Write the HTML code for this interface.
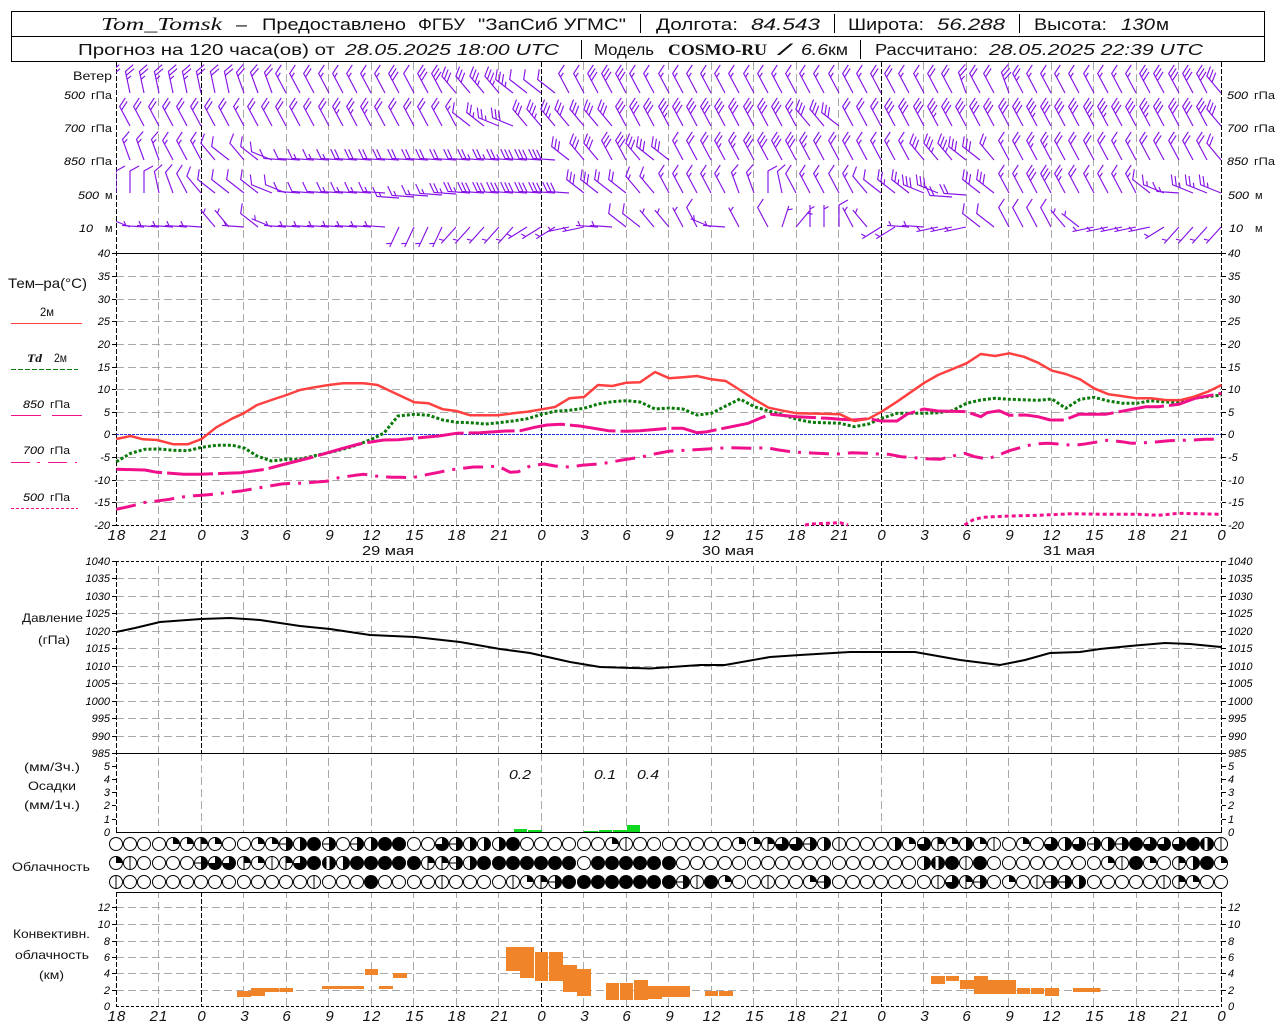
<!DOCTYPE html>
<html><head><meta charset="utf-8"><title>Tom_Tomsk</title>
<style>
html,body{margin:0;padding:0;background:#fff}
svg{display:block}
text{font-family:"Liberation Sans",sans-serif;fill:#111;white-space:pre}
.i{font-style:italic}
.se{font-family:"Liberation Serif",serif;font-style:italic}
.b{font-family:"Liberation Serif",serif;font-weight:bold}
.t{font-size:17px}
.t2{font-size:16px}
.l{font-size:12px}
.m{font-size:11px}
.n{font-size:11px;font-style:italic;fill:#000}
.h{font-size:15px;font-style:italic;text-anchor:middle;letter-spacing:1px;transform:translateX(1px)}
.e{text-anchor:end}
.f{fill:none;stroke:#8612e8;stroke-width:1.15}
</style></head><body>
<svg xmlns="http://www.w3.org/2000/svg" width="1280" height="1024" viewBox="0 0 1280 1024">
<defs>
<path id="f1" d="M0 0V-22M0-18l4.5-2.5"/>
<path id="f2" d="M0 0V-22l9-5"/>
<path id="f3" d="M0 0V-22l9-5M0-18l4.5-2.5"/>
<path id="f4" d="M0 0V-22l9-5M0-18l9-5"/>
<path id="f5" d="M0 0V-22l9-5M0-18l9-5M0-14l4.5-2.5"/>
<path id="f6" d="M0 0V-22l9-5M0-18l9-5M0-14l9-5"/>
<path id="f7" d="M0 0V-22l9-5M0-18l9-5M0-14l9-5M0-10l4.5-2.5"/>
<g id="A2" transform="rotate(-12)"><use href="#f2"/></g><g id="A4" transform="rotate(-12)"><use href="#f4"/></g><g id="A5" transform="rotate(-12)"><use href="#f5"/></g>
<g id="B2" transform="rotate(-20)"><use href="#f2"/></g><g id="B3" transform="rotate(-20)"><use href="#f3"/></g><g id="B4" transform="rotate(-20)"><use href="#f4"/></g><g id="B5" transform="rotate(-20)"><use href="#f5"/></g><g id="B6" transform="rotate(-20)"><use href="#f6"/></g>
<g id="C1" transform="rotate(-28)"><use href="#f1"/></g><g id="C2" transform="rotate(-28)"><use href="#f2"/></g><g id="C3" transform="rotate(-28)"><use href="#f3"/></g><g id="C4" transform="rotate(-28)"><use href="#f4"/></g><g id="C5" transform="rotate(-28)"><use href="#f5"/></g><g id="C6" transform="rotate(-28)"><use href="#f6"/></g><g id="C7" transform="rotate(-28)"><use href="#f7"/></g>
<g id="D1" transform="rotate(-40)"><use href="#f1"/></g><g id="D2" transform="rotate(-40)"><use href="#f2"/></g><g id="D3" transform="rotate(-40)"><use href="#f3"/></g><g id="D4" transform="rotate(-40)"><use href="#f4"/></g><g id="D6" transform="rotate(-40)"><use href="#f6"/></g><g id="D7" transform="rotate(-40)"><use href="#f7"/></g>
<g id="E1" transform="rotate(-52)"><use href="#f1"/></g><g id="E2" transform="rotate(-52)"><use href="#f2"/></g><g id="E4" transform="rotate(-52)"><use href="#f4"/></g><g id="E5" transform="rotate(-52)"><use href="#f5"/></g><g id="E6" transform="rotate(-52)"><use href="#f6"/></g><g id="E7" transform="rotate(-52)"><use href="#f7"/></g>
<g id="F1" transform="rotate(-68)"><use href="#f1"/></g><g id="F2" transform="rotate(-68)"><use href="#f2"/></g><g id="F3" transform="rotate(-68)"><use href="#f3"/></g><g id="F5" transform="rotate(-68)"><use href="#f5"/></g><g id="F6" transform="rotate(-68)"><use href="#f6"/></g>
<g id="G1" transform="rotate(-86)"><use href="#f1"/></g><g id="G2" transform="rotate(-86)"><use href="#f2"/></g><g id="G3" transform="rotate(-86)"><use href="#f3"/></g><g id="G4" transform="rotate(-86)"><use href="#f4"/></g><g id="G5" transform="rotate(-86)"><use href="#f5"/></g><g id="G6" transform="rotate(-86)"><use href="#f6"/></g>
<use id="V1" href="#f1"/><use id="V2" href="#f2"/>
<g id="W1" transform="rotate(18)"><use href="#f1"/></g><g id="X1" transform="rotate(40)"><use href="#f1"/></g>
<g id="P1" transform="rotate(205)"><use href="#f1"/></g><g id="Q1" transform="rotate(222)"><use href="#f1"/></g><g id="R1" transform="rotate(238)"><use href="#f1"/></g><g id="S1" transform="rotate(258)"><use href="#f1"/></g>
<clipPath id="cw"><rect x="116" y="62" width="1106" height="191"/></clipPath>
<circle id="O" r="6.5" fill="#fff" stroke="#000"/>
<g id="v"><use href="#O"/><path d="M0-6.5V6.5" stroke="#000"/></g>
<g id="q"><use href="#O"/><path d="M0 0V-6.5A6.5 6.5 0 0 1 6.5 0Z"/></g>
<g id="r"><use href="#v"/><path d="M0 0V-6.5A6.5 6.5 0 0 1 6.5 0Z"/></g>
<g id="d"><use href="#O"/><path d="M0-6.5A6.5 6.5 0 0 1 0 6.5Z"/></g>
<g id="h"><use href="#d"/><path d="M-6.5 0H0" stroke="#000"/></g>
<g id="t"><circle r="6.5" fill="#000" stroke="#000"/><path d="M0 0V-6A6 6 0 0 0 -6 0Z" fill="#fff"/></g>
<circle id="b" r="7" fill="#000"/>
<g id="w"><circle r="7" fill="#000"/><rect x="-2.5" y="-6" width="3" height="12" fill="#fff"/></g>
</defs>
<rect width="1280" height="1024" fill="#fff"/>

<!-- grid -->
<g stroke="#a9a9a9" stroke-width="1" stroke-dasharray="8 4" fill="none" shape-rendering="crispEdges">
<path d="M158.5 62V1006M201.5 753V832M243.5 62V1006M286.5 62V1006M328.5 62V1006M371.5 62V1006M413.5 62V1006M456.5 62V1006M498.5 62V1006M541.5 753V832M583.5 62V1006M626.5 62V1006M668.5 62V1006M711.5 62V1006M753.5 62V1006M796.5 62V1006M838.5 62V1006M881.5 753V832M923.5 62V1006M966.5 62V1006M1008.5 62V1006M1051.5 62V1006M1093.5 62V1006M1136.5 62V1006M1178.5 62V1006"/>
<path d="M116 276.5H1221M116 299.5H1221M116 321.5H1221M116 344.5H1221M116 367.5H1221M116 389.5H1221M116 412.5H1221M116 457.5H1221M116 480.5H1221M116 502.5H1221M116 578.5H1221M116 596.5H1221M116 613.5H1221M116 631.5H1221M116 648.5H1221M116 666.5H1221M116 683.5H1221M116 701.5H1221M116 718.5H1221M116 736.5H1221M116 907.5H1221M116 924.5H1221M116 941.5H1221M116 957.5H1221M116 973.5H1221M116 990.5H1221"/>
</g>
<rect x="113" y="526" width="1112" height="35" fill="#fff"/>
<rect x="0" y="833" width="1280" height="59" fill="#fff"/>

<!-- axes -->
<g stroke="#000" stroke-width="1" fill="none" shape-rendering="crispEdges">
<path stroke-dasharray="5 2" d="M116.5 62V525M201.5 62V525M541.5 62V525M881.5 62V525M1221.5 62V525M116.5 561V832M201.5 561V753M541.5 561V753M881.5 561V753M1221.5 561V832M116.5 892V1006M201.5 892V1006M541.5 892V1006M881.5 892V1006M1221.5 892V1006"/>
<path stroke-dasharray="3 2" d="M116 525.5H1222M116 561.5H1222M116 1006.5H1222"/>
<path d="M116 253.5H1222M116 753.5H1222M116 832.5H1222M116 892.5H1222"/>
<path d="M112 253.5h4M112 276.5h4M112 299.5h4M112 321.5h4M112 344.5h4M112 367.5h4M112 389.5h4M112 412.5h4M112 434.5h4M112 457.5h4M112 480.5h4M112 502.5h4M112 525.5h4M112 561.5h4M112 578.5h4M112 596.5h4M112 613.5h4M112 631.5h4M112 648.5h4M112 666.5h4M112 683.5h4M112 701.5h4M112 718.5h4M112 736.5h4M112 753.5h4M112 766.5h4M112 779.5h4M112 792.5h4M112 805.5h4M112 819.5h4M112 907.5h4M112 924.5h4M112 941.5h4M112 957.5h4M112 973.5h4M112 990.5h4"/>
<path d="M1222 253.5h4M1222 276.5h4M1222 299.5h4M1222 321.5h4M1222 344.5h4M1222 367.5h4M1222 389.5h4M1222 412.5h4M1222 434.5h4M1222 457.5h4M1222 480.5h4M1222 502.5h4M1222 525.5h4M1222 561.5h4M1222 578.5h4M1222 596.5h4M1222 613.5h4M1222 631.5h4M1222 648.5h4M1222 666.5h4M1222 683.5h4M1222 701.5h4M1222 718.5h4M1222 736.5h4M1222 753.5h4M1222 766.5h4M1222 779.5h4M1222 792.5h4M1222 805.5h4M1222 819.5h4M1222 907.5h4M1222 924.5h4M1222 941.5h4M1222 957.5h4M1222 973.5h4M1222 990.5h4"/>
<rect x="11.5" y="11.5" width="1253" height="25"/>
<rect x="11.5" y="36.5" width="1253" height="25"/>
<path d="M640.5 14V33M834.5 14V33M1019.5 14V33M581.5 40V59M860.5 40V59"/>
</g>

<!-- header -->
<text class="se" style="font-size:18px" x="101" y="30" textLength="121" lengthAdjust="spacingAndGlyphs">Tom_Tomsk</text>
<text class="t" x="236" y="30" textLength="11" lengthAdjust="spacingAndGlyphs">–</text>
<text class="t" x="262" y="30" textLength="144" lengthAdjust="spacingAndGlyphs">Предоставлено</text>
<text class="t" x="418" y="30" textLength="47" lengthAdjust="spacingAndGlyphs">ФГБУ</text>
<text class="t" x="478" y="30" textLength="148" lengthAdjust="spacingAndGlyphs">"ЗапСиб УГМС"</text>
<text class="t" x="656" y="30" textLength="82" lengthAdjust="spacingAndGlyphs">Долгота:</text>
<text class="t i" x="751" y="30" textLength="69" lengthAdjust="spacingAndGlyphs">84.543</text>
<text class="t" x="848" y="30" textLength="76" lengthAdjust="spacingAndGlyphs">Широта:</text>
<text class="t i" x="937" y="30" textLength="68" lengthAdjust="spacingAndGlyphs">56.288</text>
<text class="t" x="1034" y="30" textLength="73" lengthAdjust="spacingAndGlyphs">Высота:</text>
<text class="t i" x="1121" y="30" textLength="34" lengthAdjust="spacingAndGlyphs">130</text>
<text class="t" x="1156" y="30" textLength="13" lengthAdjust="spacingAndGlyphs">м</text>
<text class="t2" x="78" y="55" textLength="257" lengthAdjust="spacingAndGlyphs">Прогноз на 120 часа(ов) от</text>
<text class="t2 i" x="345" y="55" textLength="214" lengthAdjust="spacingAndGlyphs">28.05.2025 18:00 UTC</text>
<text class="t2" x="594" y="55" textLength="60" lengthAdjust="spacingAndGlyphs">Модель</text>
<text class="t2 b" x="668" y="55" textLength="99" lengthAdjust="spacingAndGlyphs">COSMO-RU</text>
<text class="t2 i" x="779" y="55" textLength="11" lengthAdjust="spacingAndGlyphs">/</text>
<text class="t2 i" x="801" y="55" textLength="27" lengthAdjust="spacingAndGlyphs">6.6</text>
<text class="t2" x="828" y="55" textLength="20" lengthAdjust="spacingAndGlyphs">км</text>
<text class="t2" x="875" y="55" textLength="103" lengthAdjust="spacingAndGlyphs">Рассчитано:</text>
<text class="t2 i" x="989" y="55" textLength="214" lengthAdjust="spacingAndGlyphs">28.05.2025 22:39 UTC</text>

<!-- side labels wind -->
<text class="l" x="73" y="80" textLength="39" lengthAdjust="spacingAndGlyphs">Ветер</text>
<text class="n" x="64" y="99" textLength="21" lengthAdjust="spacingAndGlyphs">500</text><text class="m" x="91" y="99" textLength="21" lengthAdjust="spacingAndGlyphs">гПа</text>
<text class="n" x="64" y="132" textLength="21" lengthAdjust="spacingAndGlyphs">700</text><text class="m" x="91" y="132" textLength="21" lengthAdjust="spacingAndGlyphs">гПа</text>
<text class="n" x="64" y="165" textLength="21" lengthAdjust="spacingAndGlyphs">850</text><text class="m" x="91" y="165" textLength="21" lengthAdjust="spacingAndGlyphs">гПа</text>
<text class="n" x="78" y="199" textLength="21" lengthAdjust="spacingAndGlyphs">500</text><text class="m" x="105" y="199">м</text>
<text class="n" x="79" y="232" textLength="14" lengthAdjust="spacingAndGlyphs">10</text><text class="m" x="105" y="232">м</text>
<text class="n" x="1227" y="99" textLength="21" lengthAdjust="spacingAndGlyphs">500</text><text class="m" x="1254" y="99" textLength="21" lengthAdjust="spacingAndGlyphs">гПа</text>
<text class="n" x="1227" y="132" textLength="21" lengthAdjust="spacingAndGlyphs">700</text><text class="m" x="1254" y="132" textLength="21" lengthAdjust="spacingAndGlyphs">гПа</text>
<text class="n" x="1227" y="165" textLength="21" lengthAdjust="spacingAndGlyphs">850</text><text class="m" x="1254" y="165" textLength="21" lengthAdjust="spacingAndGlyphs">гПа</text>
<text class="n" x="1228" y="199" textLength="21" lengthAdjust="spacingAndGlyphs">500</text><text class="m" x="1255" y="199">м</text>
<text class="n" x="1229" y="232" textLength="14" lengthAdjust="spacingAndGlyphs">10</text><text class="m" x="1255" y="232">м</text>

<!-- wind barbs -->
<g clip-path="url(#cw)"><g class="f">
<g transform="translate(0,93)">
<use href="#A4" x="116"/><use href="#A5" x="130"/><use href="#A5" x="144"/><use href="#A5" x="159"/><use href="#A5" x="173"/><use href="#A5" x="187"/><use href="#A4" x="201"/><use href="#A4" x="215"/><use href="#A4" x="229"/><use href="#B4" x="244"/><use href="#B4" x="258"/><use href="#B4" x="272"/><use href="#C3" x="286"/><use href="#C3" x="300"/><use href="#C4" x="314"/><use href="#C3" x="329"/><use href="#C3" x="343"/><use href="#C3" x="357"/><use href="#C3" x="371"/><use href="#C3" x="385"/><use href="#C6" x="399"/><use href="#C2" x="414"/><use href="#C6" x="428"/><use href="#C6" x="442"/><use href="#D6" x="456"/><use href="#D6" x="470"/><use href="#D7" x="484"/><use href="#D7" x="499"/><use href="#E7" x="513"/><use href="#E2" x="527"/><use href="#E2" x="541"/><use href="#E2" x="555"/><use href="#C3" x="569"/><use href="#C3" x="584"/><use href="#C6" x="598"/><use href="#C6" x="612"/><use href="#C6" x="626"/><use href="#C3" x="640"/><use href="#C3" x="654"/><use href="#C3" x="669"/><use href="#C3" x="683"/><use href="#C3" x="697"/><use href="#C3" x="711"/><use href="#C3" x="725"/><use href="#C3" x="739"/><use href="#C3" x="754"/><use href="#C3" x="768"/><use href="#C3" x="782"/><use href="#C3" x="796"/><use href="#C3" x="810"/><use href="#C3" x="824"/><use href="#C3" x="839"/><use href="#C4" x="853"/><use href="#C3" x="867"/><use href="#C4" x="881"/><use href="#C4" x="895"/><use href="#C3" x="909"/><use href="#C3" x="924"/><use href="#C4" x="938"/><use href="#C4" x="952"/><use href="#B5" x="966"/><use href="#C4" x="980"/><use href="#C4" x="994"/><use href="#B6" x="1009"/><use href="#C5" x="1023"/><use href="#C3" x="1037"/><use href="#C3" x="1051"/><use href="#C3" x="1065"/><use href="#C3" x="1079"/><use href="#C3" x="1094"/><use href="#C3" x="1108"/><use href="#C3" x="1122"/><use href="#C3" x="1136"/><use href="#C6" x="1150"/><use href="#C6" x="1164"/><use href="#C6" x="1179"/><use href="#C6" x="1193"/><use href="#C6" x="1207"/><use href="#D6" x="1221"/>
</g>
<g transform="translate(0,126)">
<use href="#C4" x="116"/><use href="#C4" x="130"/><use href="#C4" x="144"/><use href="#C4" x="159"/><use href="#C4" x="173"/><use href="#C4" x="187"/><use href="#C4" x="201"/><use href="#C4" x="215"/><use href="#C4" x="229"/><use href="#C3" x="244"/><use href="#C4" x="258"/><use href="#C4" x="272"/><use href="#C4" x="286"/><use href="#C4" x="300"/><use href="#C4" x="314"/><use href="#C4" x="329"/><use href="#C5" x="343"/><use href="#C5" x="357"/><use href="#C5" x="371"/><use href="#C4" x="385"/><use href="#C4" x="399"/><use href="#C4" x="414"/><use href="#C4" x="428"/><use href="#C4" x="442"/><use href="#C3" x="456"/><use href="#E2" x="470"/><use href="#E5" x="484"/><use href="#F5" x="499"/><use href="#F6" x="513"/><use href="#D6" x="527"/><use href="#D7" x="541"/><use href="#D7" x="555"/><use href="#D6" x="569"/><use href="#D6" x="584"/><use href="#D6" x="598"/><use href="#D6" x="612"/><use href="#C6" x="626"/><use href="#C6" x="640"/><use href="#C6" x="654"/><use href="#C7" x="669"/><use href="#C6" x="683"/><use href="#C6" x="697"/><use href="#C6" x="711"/><use href="#C6" x="725"/><use href="#C6" x="739"/><use href="#C6" x="754"/><use href="#C6" x="768"/><use href="#C6" x="782"/><use href="#C5" x="796"/><use href="#D6" x="810"/><use href="#D6" x="824"/><use href="#E6" x="839"/><use href="#C4" x="853"/><use href="#C4" x="867"/><use href="#C4" x="881"/><use href="#C6" x="895"/><use href="#C6" x="909"/><use href="#C6" x="924"/><use href="#C7" x="938"/><use href="#C6" x="952"/><use href="#C6" x="966"/><use href="#C6" x="980"/><use href="#C6" x="994"/><use href="#C6" x="1009"/><use href="#C6" x="1023"/><use href="#C7" x="1037"/><use href="#C6" x="1051"/><use href="#C6" x="1065"/><use href="#C6" x="1079"/><use href="#C7" x="1094"/><use href="#C7" x="1108"/><use href="#C6" x="1122"/><use href="#C6" x="1136"/><use href="#C7" x="1150"/><use href="#C6" x="1164"/><use href="#C6" x="1179"/><use href="#C6" x="1193"/><use href="#C6" x="1207"/><use href="#D6" x="1221"/>
</g>
<g transform="translate(0,160)">
<use href="#B3" x="116"/><use href="#B3" x="130"/><use href="#B3" x="144"/><use href="#B3" x="159"/><use href="#C3" x="173"/><use href="#C3" x="187"/><use href="#C3" x="201"/><use href="#D2" x="215"/><use href="#E2" x="229"/><use href="#D2" x="244"/><use href="#E2" x="258"/><use href="#F2" x="272"/><use href="#G2" x="286"/><use href="#G2" x="300"/><use href="#G3" x="314"/><use href="#G3" x="329"/><use href="#G3" x="343"/><use href="#G4" x="357"/><use href="#G4" x="371"/><use href="#G4" x="385"/><use href="#G4" x="399"/><use href="#G4" x="414"/><use href="#G4" x="428"/><use href="#G4" x="442"/><use href="#G4" x="456"/><use href="#G4" x="470"/><use href="#G5" x="484"/><use href="#G5" x="499"/><use href="#G5" x="513"/><use href="#G6" x="527"/><use href="#G6" x="541"/><use href="#G6" x="555"/><use href="#E6" x="569"/><use href="#D6" x="584"/><use href="#D6" x="598"/><use href="#C6" x="612"/><use href="#C6" x="626"/><use href="#D6" x="640"/><use href="#E6" x="654"/><use href="#E6" x="669"/><use href="#C3" x="683"/><use href="#C4" x="697"/><use href="#C4" x="711"/><use href="#C5" x="725"/><use href="#C5" x="739"/><use href="#C6" x="754"/><use href="#C6" x="768"/><use href="#C6" x="782"/><use href="#C6" x="796"/><use href="#C5" x="810"/><use href="#C4" x="824"/><use href="#C4" x="839"/><use href="#C4" x="853"/><use href="#C3" x="867"/><use href="#C3" x="881"/><use href="#C3" x="895"/><use href="#C3" x="909"/><use href="#D6" x="924"/><use href="#D7" x="938"/><use href="#D7" x="952"/><use href="#E6" x="966"/><use href="#E6" x="980"/><use href="#D4" x="994"/><use href="#C3" x="1009"/><use href="#C4" x="1023"/><use href="#C5" x="1037"/><use href="#C5" x="1051"/><use href="#C4" x="1065"/><use href="#C4" x="1079"/><use href="#C4" x="1094"/><use href="#C4" x="1108"/><use href="#C3" x="1122"/><use href="#C3" x="1136"/><use href="#C4" x="1150"/><use href="#C4" x="1164"/><use href="#C4" x="1179"/><use href="#C4" x="1193"/><use href="#C4" x="1207"/><use href="#D4" x="1221"/>
</g>
<g transform="translate(0,193)">
<use href="#V2" x="116"/><use href="#V2" x="130"/><use href="#V2" x="144"/><use href="#A2" x="159"/><use href="#B2" x="173"/><use href="#C2" x="187"/><use href="#D2" x="201"/><use href="#E2" x="215"/><use href="#E2" x="229"/><use href="#E2" x="244"/><use href="#E2" x="258"/><use href="#F2" x="272"/><use href="#F2" x="286"/><use href="#G2" x="300"/><use href="#G2" x="314"/><use href="#G2" x="329"/><use href="#G3" x="343"/><use href="#G3" x="357"/><use href="#G3" x="371"/><use href="#G3" x="385"/><use href="#G3" x="399" y="5"/><use href="#G3" x="414" y="4"/><use href="#G3" x="428" y="3"/><use href="#G3" x="442" y="2"/><use href="#G5" x="456" y="1"/><use href="#G5" x="470"/><use href="#G6" x="484"/><use href="#G6" x="499"/><use href="#G6" x="513"/><use href="#G6" x="527"/><use href="#G6" x="541"/><use href="#G6" x="555"/><use href="#G6" x="569"/><use href="#E6" x="584"/><use href="#E6" x="598"/><use href="#E4" x="612"/><use href="#E4" x="626"/><use href="#D3" x="640"/><use href="#D3" x="654"/><use href="#C3" x="669"/><use href="#C3" x="683"/><use href="#C3" x="697"/><use href="#C3" x="711"/><use href="#C3" x="725"/><use href="#B3" x="739"/><use href="#B3" x="754"/><use href="#V2" x="768"/><use href="#A2" x="782"/><use href="#C2" x="796"/><use href="#C3" x="810"/><use href="#C3" x="824"/><use href="#C2" x="839"/><use href="#C3" x="853"/><use href="#D2" x="867"/><use href="#E2" x="881"/><use href="#E5" x="895"/><use href="#E5" x="909"/><use href="#F6" x="924"/><use href="#F6" x="938"/><use href="#G4" x="952" y="4"/><use href="#G4" x="966" y="2"/><use href="#E6" x="980"/><use href="#E6" x="994"/><use href="#C3" x="1009"/><use href="#C3" x="1023"/><use href="#C6" x="1037"/><use href="#C6" x="1051"/><use href="#C5" x="1065"/><use href="#C4" x="1079"/><use href="#C3" x="1094"/><use href="#C3" x="1108"/><use href="#C3" x="1122"/><use href="#C3" x="1136"/><use href="#E2" x="1150"/><use href="#F3" x="1164"/><use href="#G3" x="1179"/><use href="#F5" x="1193"/><use href="#F5" x="1207"/><use href="#F5" x="1221"/>
</g>
<g transform="translate(0,227)">
<use href="#G1" x="116"/><use href="#F1" x="130"/><use href="#G1" x="144"/><use href="#G1" x="159"/><use href="#G1" x="173"/><use href="#G1" x="187"/><use href="#G1" x="201"/><use href="#D1" x="215"/><use href="#D1" x="229"/><use href="#G1" x="244"/><use href="#E2" x="258"/><use href="#F1" x="272"/><use href="#G1" x="286"/><use href="#G1" x="300"/><use href="#G1" x="314"/><use href="#G1" x="329"/><use href="#G1" x="343"/><use href="#G1" x="357"/><use href="#G1" x="371"/><use href="#G1" x="385"/><use href="#P1" x="399"/><use href="#P1" x="414"/><use href="#P1" x="428"/><use href="#P1" x="442"/><use href="#Q1" x="456"/><use href="#Q1" x="470"/><use href="#Q1" x="484"/><use href="#Q1" x="499"/><use href="#Q1" x="513"/><use href="#R1" x="527"/><use href="#R1" x="541"/><use href="#R1" x="555"/><use href="#S1" x="569"/><use href="#S1" x="584"/><use href="#G1" x="598"/><use href="#G1" x="612"/><use href="#E2" x="626"/><use href="#E2" x="640"/><use href="#D1" x="654"/><use href="#D1" x="669"/><use href="#C1" x="683"/><use href="#C2" x="697"/><use href="#F1" x="711"/><use href="#G1" x="725"/><use href="#C1" x="739"/><use href="#C2" x="768"/><use href="#W1" x="782"/><use href="#X1" x="796"/><use href="#V1" x="810"/><use href="#V1" x="824"/><use href="#V2" x="839"/><use href="#C1" x="853"/><use href="#D1" x="867"/><use href="#R1" x="881"/><use href="#R1" x="895"/><use href="#G1" x="909"/><use href="#G1" x="924"/><use href="#S1" x="938"/><use href="#S1" x="952"/><use href="#S1" x="966"/><use href="#E2" x="980"/><use href="#E2" x="994"/><use href="#C2" x="1009"/><use href="#C2" x="1023"/><use href="#C2" x="1037"/><use href="#C2" x="1051"/><use href="#D1" x="1065"/><use href="#E1" x="1079"/><use href="#S1" x="1094"/><use href="#S1" x="1108"/><use href="#S1" x="1122"/><use href="#S1" x="1136"/><use href="#S1" x="1150"/><use href="#R1" x="1164"/><use href="#Q1" x="1179"/><use href="#Q1" x="1193"/><use href="#Q1" x="1207"/><use href="#Q1" x="1221"/>
</g>
</g></g>

<!-- temp labels -->
<text style="font-size:14px" x="8" y="288" textLength="79" lengthAdjust="spacingAndGlyphs">Тем–ра(°C)</text>
<text class="l" x="40" y="316" textLength="14" lengthAdjust="spacingAndGlyphs">2м</text>
<path d="M11 323.5H82" stroke="#ff4040" fill="none" shape-rendering="crispEdges"/>
<text class="se" style="font-size:12px;font-weight:bold" x="27" y="362" textLength="15" lengthAdjust="spacingAndGlyphs">Td</text>
<text class="l" x="54" y="362" textLength="13" lengthAdjust="spacingAndGlyphs">2м</text>
<path d="M11 369.5H78" stroke="#0a7a0a" stroke-dasharray="5 2" fill="none" shape-rendering="crispEdges"/>
<text class="n" x="23" y="408" textLength="21" lengthAdjust="spacingAndGlyphs">850</text><text class="m" x="50" y="408" textLength="20" lengthAdjust="spacingAndGlyphs">гПа</text>
<path d="M11 415.5H41M52 415.5H82" stroke="#f0108c" fill="none" shape-rendering="crispEdges"/>
<text class="n" x="23" y="454" textLength="21" lengthAdjust="spacingAndGlyphs">700</text><text class="m" x="50" y="454" textLength="20" lengthAdjust="spacingAndGlyphs">гПа</text>
<path d="M11 462.5H30M37 462.5H40M48 462.5H67M75 462.5H77" stroke="#f0108c" fill="none" shape-rendering="crispEdges"/>
<text class="n" x="23" y="501" textLength="21" lengthAdjust="spacingAndGlyphs">500</text><text class="m" x="50" y="501" textLength="20" lengthAdjust="spacingAndGlyphs">гПа</text>
<path d="M11 508.5H78" stroke="#f0108c" stroke-dasharray="3 2" fill="none" shape-rendering="crispEdges"/>
<text class="n e" x="110" y="257">40</text><text class="n e" x="110" y="280">35</text><text class="n e" x="110" y="303">30</text><text class="n e" x="110" y="325">25</text><text class="n e" x="110" y="348">20</text><text class="n e" x="110" y="371">15</text><text class="n e" x="110" y="393">10</text><text class="n e" x="110" y="416">5</text><text class="n e" x="110" y="438">0</text><text class="n e" x="110" y="461">-5</text><text class="n e" x="110" y="484">-10</text><text class="n e" x="110" y="506">-15</text><text class="n e" x="110" y="529">-20</text>
<text class="n" x="1228" y="257">40</text><text class="n" x="1228" y="280">35</text><text class="n" x="1228" y="303">30</text><text class="n" x="1228" y="325">25</text><text class="n" x="1228" y="348">20</text><text class="n" x="1228" y="371">15</text><text class="n" x="1228" y="393">10</text><text class="n" x="1228" y="416">5</text><text class="n" x="1228" y="438">0</text><text class="n" x="1228" y="461">-5</text><text class="n" x="1228" y="484">-10</text><text class="n" x="1228" y="506">-15</text><text class="n" x="1228" y="529">-20</text>

<!-- temp curves -->
<path d="M116 434.5H1221" stroke="#2030e8" stroke-dasharray="3 1" fill="none" shape-rendering="crispEdges"/>
<g fill="none" stroke-linejoin="round">
<polyline stroke="#0a7a0a" stroke-width="3" stroke-dasharray="3 2" points="116.3,461.7 130.6,453.3 144.9,449.3 159.2,449 173.5,450.3 187.8,450.7 201.6,447.3 216.3,445.3 232.7,445.3 244.9,448.3 257,456 271.4,461 286.5,459.3 300,459.3 314.3,455.7 328.6,452.7 342.9,449.3 357,445 371.4,439.3 383.7,433.3 398,416 414.3,414.3 428.6,415.3 442.9,420 456.3,422.3 470.2,422.7 485.7,424 498.8,422.7 513,421 527.3,418.7 541.6,414.3 555,411.3 569.4,410.3 584,408.3 598,404 612.2,401.7 626.5,400.7 640,402 655,409 669.4,408 682.9,409 697,415 711.4,413.3 725.7,406 740,399 754.3,406.7 768.6,411 782.9,415 797,419.3 811.4,422.3 840,423.3 854.3,426.7 868.6,424 881.6,418.3 897,413.3 924.5,413.3 938,412.7 952,410.7 966.5,403.3 980.8,400 995,398.3 1009.4,399.3 1038,400.3 1052,399 1065.7,408.3 1080,399.3 1094,397.3 1108.6,401 1122.9,403.3 1136.7,403.3 1151,400.7 1165.3,402 1179.6,402.3 1193.9,398.3 1221.6,395"/>
<polyline stroke="#f0108c" stroke-width="3" stroke-dasharray="46 5" points="116.3,469.3 144.9,470 157,472.3 183.7,474.3 200,474.3 226.5,473.3 240.8,472.7 265.3,469.3 281.6,465 314.3,456.7 342.9,448.3 359,444 383.7,440 398,439.7 424.5,437.3 438.8,436 456.3,433.3 479.6,432.7 506,431 520.4,430.7 534.7,427.3 546.9,425 561.2,424.3 579.6,426 587.8,427.3 600,429.3 608.2,430.7 626.5,431.3 640,430.7 668.6,428.3 682.9,428.3 697,432.7 707.3,431.7 721.6,428.7 748.2,423.3 762.4,417.3 770.6,414.3 797,416.7 827.8,418.3 840,419.3 854.3,420 868.6,418.7 880.8,421 897,421 907.3,414 923.7,409 938,411 966.5,411.7 980.8,416.7 987,412.7 999.2,410.7 1009.4,415.3 1025.7,415 1038,416.7 1050.2,420 1064.5,420 1078.8,414.3 1105.3,414.3 1119.6,411.7 1146,406.7 1158.4,406.7 1178.8,404.3 1195,398.3 1221.6,393.3"/>
<polyline stroke="#f0108c" stroke-width="3" stroke-dasharray="20 8 3 8" points="116.3,509.3 132.7,505.7 142.9,502.7 157,501 169.4,499.3 179.6,497.3 191.8,496 208.2,494.7 216.3,494 226.5,492.7 242.9,490.7 265.3,486.7 281.6,484 290.6,483.3 302,483.3 316.3,482 326.5,481.3 338.8,477.7 355,475.3 364,474.3 375.5,476 391.8,477.3 400,477.3 412.2,477.7 426.5,474.7 438.8,472.3 449,470 463.3,468.3 473.5,467 485.7,467 498,466 510.2,472.3 518.4,471.7 530.6,465.7 544,464 555,466 569.4,467 581.6,465.3 598,464 608.2,462.7 618.4,460.7 628.6,459 640,457.3 654.3,454 668.6,451.3 691,450 707.3,449 727.8,447.7 754.3,448.3 766.5,447.7 778.8,450 791,451.7 803.3,452.7 827.8,453.7 840,454 852.2,452.7 866.5,453.3 878.8,454 889,454.3 901.2,456.7 913.5,457.7 925.7,458.7 940,459.3 950.2,456.7 964.5,453.3 974.7,456.7 987,459 997,455.7 1009.4,450.7 1021.6,447.3 1033.9,444 1048,443.3 1058.4,444 1072.7,445.3 1082.9,444.3 1095,442.3 1107.3,440.3 1121.6,441.7 1131.8,443.3 1144,442.7 1158.4,441.7 1168.6,440.7 1193,440 1205.3,439.3 1221.6,439.3"/>
<polyline stroke="#f0108c" stroke-width="3" stroke-dasharray="4 3" points="805,525 811.4,524 840,522.7 848,525"/>
<polyline stroke="#f0108c" stroke-width="3" stroke-dasharray="4 3" points="964.5,525 972.7,520 982.9,517.3 1009.4,516 1038,515.3 1072.7,513.7 1101.2,514.3 1138,514.3 1158.4,515.3 1178.8,513.3 1221.6,514.3"/>
<polyline stroke="#ff4040" stroke-width="2.5" points="116.3,439 130.6,436 142.9,439.3 157,440 173.5,444.3 187.8,444.3 201.6,439 216.3,427.3 232.7,418.3 243.7,413.3 257,405 271.4,400 286.5,395 300,390 314.3,387.3 328.6,385 342.9,383.3 363.3,383.3 377.6,385 391.8,391.7 414.3,402.3 428.6,403.3 442.9,409.3 456.3,411 470.2,415.3 498,415.3 513,413.3 527.3,411.7 541.6,409.3 555,407 569.4,398.3 584,397 598,385 612.2,386 626.5,382.7 640,382.3 655,372 669.4,378.3 682.9,377.3 697,376 711.4,379.3 725.7,381 740,390 754.3,399.3 768.6,407.7 782.9,410.7 797,413.3 823.7,413.7 840,414.3 854.3,421 868.6,418.7 881.6,411.7 897,401.7 924.5,382.7 938,375 966.5,363.3 980.8,354 995,356 1009.4,353.3 1023.7,356.7 1038,362.7 1052,370.7 1065.7,374 1080,379.3 1094,388.3 1108.6,394.3 1122.9,396.3 1136.7,398.3 1151,398.3 1165.3,400 1179.6,400.3 1193.9,396.7 1207.8,391.7 1221.6,385"/>
</g>

<!-- hours 1 -->
<text class="h" x="116" y="540">18</text><text class="h" x="158" y="540">21</text><text class="h" x="201" y="540">0</text><text class="h" x="244" y="540">3</text><text class="h" x="286" y="540">6</text><text class="h" x="329" y="540">9</text><text class="h" x="371" y="540">12</text><text class="h" x="414" y="540">15</text><text class="h" x="456" y="540">18</text><text class="h" x="499" y="540">21</text><text class="h" x="541" y="540">0</text><text class="h" x="584" y="540">3</text><text class="h" x="626" y="540">6</text><text class="h" x="669" y="540">9</text><text class="h" x="711" y="540">12</text><text class="h" x="754" y="540">15</text><text class="h" x="796" y="540">18</text><text class="h" x="839" y="540">21</text><text class="h" x="881" y="540">0</text><text class="h" x="924" y="540">3</text><text class="h" x="966" y="540">6</text><text class="h" x="1009" y="540">9</text><text class="h" x="1051" y="540">12</text><text class="h" x="1094" y="540">15</text><text class="h" x="1136" y="540">18</text><text class="h" x="1179" y="540">21</text><text class="h" x="1221" y="540">0</text>
<text style="font-size:13px" x="362" y="555" textLength="52" lengthAdjust="spacingAndGlyphs">29 мая</text>
<text style="font-size:13px" x="702" y="555" textLength="52" lengthAdjust="spacingAndGlyphs">30 мая</text>
<text style="font-size:13px" x="1043" y="555" textLength="52" lengthAdjust="spacingAndGlyphs">31 мая</text>

<!-- pressure -->
<text class="l" x="22" y="622" textLength="61" lengthAdjust="spacingAndGlyphs">Давление</text>
<text class="l" x="38" y="644" textLength="32" lengthAdjust="spacingAndGlyphs">(гПа)</text>
<text class="n e" x="110" y="565">1040</text><text class="n e" x="110" y="582">1035</text><text class="n e" x="110" y="600">1030</text><text class="n e" x="110" y="617">1025</text><text class="n e" x="110" y="635">1020</text><text class="n e" x="110" y="652">1015</text><text class="n e" x="110" y="670">1010</text><text class="n e" x="110" y="687">1005</text><text class="n e" x="110" y="705">1000</text><text class="n e" x="110" y="722">995</text><text class="n e" x="110" y="740">990</text><text class="n e" x="110" y="757">985</text>
<text class="n" x="1228" y="565">1040</text><text class="n" x="1228" y="582">1035</text><text class="n" x="1228" y="600">1030</text><text class="n" x="1228" y="617">1025</text><text class="n" x="1228" y="635">1020</text><text class="n" x="1228" y="652">1015</text><text class="n" x="1228" y="670">1010</text><text class="n" x="1228" y="687">1005</text><text class="n" x="1228" y="705">1000</text><text class="n" x="1228" y="722">995</text><text class="n" x="1228" y="740">990</text><text class="n" x="1228" y="757">985</text>
<polyline fill="none" stroke="#000" stroke-width="2" points="116,632 135,628 160,622 201,619 230,618 260,620 300,626 330,629 370,635 415,637 460,642 500,649 530,653 570,662 600,667 650,668.5 700,665 725,665 770,657 800,655 850,652 915,652 960,660 1000,665 1025,660 1050,653 1080,652 1100,649 1130,646 1165,643 1190,644 1221,647"/>

<!-- precip -->
<text class="l" x="24" y="771" textLength="56" lengthAdjust="spacingAndGlyphs">(мм/3ч.)</text>
<text class="l" x="28" y="790" textLength="48" lengthAdjust="spacingAndGlyphs">Осадки</text>
<text class="l" x="24" y="809" textLength="56" lengthAdjust="spacingAndGlyphs">(мм/1ч.)</text>
<text class="n e" x="110" y="770">5</text><text class="n e" x="110" y="783">4</text><text class="n e" x="110" y="796">3</text><text class="n e" x="110" y="809">2</text><text class="n e" x="110" y="823">1</text><text class="n e" x="110" y="836">0</text>
<text class="n" x="1228" y="770">5</text><text class="n" x="1228" y="783">4</text><text class="n" x="1228" y="796">3</text><text class="n" x="1228" y="809">2</text><text class="n" x="1228" y="823">1</text><text class="n" x="1228" y="836">0</text>
<text class="i" style="font-size:13px" x="509" y="779" textLength="22" lengthAdjust="spacingAndGlyphs">0.2</text>
<text class="i" style="font-size:13px" x="594" y="779" textLength="22" lengthAdjust="spacingAndGlyphs">0.1</text>
<text class="i" style="font-size:13px" x="637" y="779" textLength="22" lengthAdjust="spacingAndGlyphs">0.4</text>
<g fill="#10d820">
<rect x="514" y="829" width="13" height="3"/><rect x="528" y="830" width="14" height="2"/><rect x="584" y="831" width="14" height="1"/><rect x="599" y="830" width="13" height="2"/><rect x="613" y="830" width="14" height="2"/><rect x="627" y="825" width="13" height="7"/>
</g>
<path d="M116 832.5H1222" stroke="#000" shape-rendering="crispEdges"/>

<!-- cloud -->
<text class="l" x="12" y="871" textLength="78" lengthAdjust="spacingAndGlyphs">Облачность</text>
<g transform="translate(0,844)">
<use href="#O" x="116"/><use href="#O" x="130"/><use href="#O" x="144"/><use href="#O" x="159"/><use href="#q" x="173"/><use href="#q" x="187"/><use href="#r" x="201"/><use href="#q" x="215"/><use href="#O" x="229"/><use href="#O" x="244"/><use href="#q" x="258"/><use href="#q" x="272"/><use href="#h" x="286"/><use href="#d" x="300"/><use href="#b" x="314"/><use href="#h" x="329"/><use href="#O" x="343"/><use href="#h" x="357"/><use href="#d" x="371"/><use href="#b" x="385"/><use href="#b" x="399"/><use href="#O" x="414"/><use href="#O" x="428"/><use href="#t" x="442"/><use href="#h" x="456"/><use href="#d" x="470"/><use href="#d" x="484"/><use href="#d" x="499"/><use href="#b" x="513"/><use href="#O" x="527"/><use href="#O" x="541"/><use href="#O" x="555"/><use href="#O" x="569"/><use href="#O" x="584"/><use href="#O" x="598"/><use href="#q" x="612"/><use href="#v" x="626"/><use href="#O" x="640"/><use href="#O" x="654"/><use href="#O" x="669"/><use href="#O" x="683"/><use href="#O" x="697"/><use href="#O" x="711"/><use href="#O" x="725"/><use href="#q" x="739"/><use href="#q" x="754"/><use href="#r" x="768"/><use href="#t" x="782"/><use href="#t" x="796"/><use href="#h" x="810"/><use href="#d" x="824"/><use href="#v" x="839"/><use href="#O" x="853"/><use href="#O" x="867"/><use href="#O" x="881"/><use href="#d" x="895"/><use href="#q" x="909"/><use href="#t" x="924"/><use href="#r" x="938"/><use href="#q" x="952"/><use href="#d" x="966"/><use href="#q" x="980"/><use href="#v" x="994"/><use href="#O" x="1009"/><use href="#q" x="1023"/><use href="#O" x="1037"/><use href="#t" x="1051"/><use href="#d" x="1065"/><use href="#t" x="1079"/><use href="#h" x="1094"/><use href="#d" x="1108"/><use href="#h" x="1122"/><use href="#b" x="1136"/><use href="#t" x="1150"/><use href="#t" x="1164"/><use href="#t" x="1179"/><use href="#b" x="1193"/><use href="#w" x="1207"/><use href="#v" x="1221"/>
</g>
<g transform="translate(0,863)">
<use href="#q" x="116"/><use href="#v" x="130"/><use href="#O" x="144"/><use href="#O" x="159"/><use href="#O" x="173"/><use href="#O" x="187"/><use href="#h" x="201"/><use href="#t" x="215"/><use href="#t" x="229"/><use href="#r" x="244"/><use href="#q" x="258"/><use href="#v" x="272"/><use href="#r" x="286"/><use href="#t" x="300"/><use href="#b" x="314"/><use href="#w" x="329"/><use href="#d" x="343"/><use href="#b" x="357"/><use href="#b" x="371"/><use href="#b" x="385"/><use href="#b" x="399"/><use href="#b" x="414"/><use href="#r" x="428"/><use href="#r" x="442"/><use href="#h" x="456"/><use href="#d" x="470"/><use href="#b" x="484"/><use href="#b" x="499"/><use href="#b" x="513"/><use href="#b" x="527"/><use href="#b" x="541"/><use href="#b" x="555"/><use href="#b" x="569"/><use href="#O" x="584"/><use href="#b" x="598"/><use href="#b" x="612"/><use href="#b" x="626"/><use href="#b" x="640"/><use href="#b" x="654"/><use href="#b" x="669"/><use href="#O" x="683"/><use href="#O" x="697"/><use href="#O" x="711"/><use href="#O" x="725"/><use href="#O" x="739"/><use href="#O" x="754"/><use href="#O" x="768"/><use href="#O" x="782"/><use href="#O" x="796"/><use href="#O" x="810"/><use href="#O" x="824"/><use href="#O" x="839"/><use href="#O" x="853"/><use href="#O" x="867"/><use href="#O" x="881"/><use href="#O" x="895"/><use href="#O" x="909"/><use href="#d" x="924"/><use href="#w" x="938"/><use href="#b" x="952"/><use href="#v" x="966"/><use href="#b" x="980"/><use href="#O" x="994"/><use href="#O" x="1009"/><use href="#O" x="1023"/><use href="#O" x="1037"/><use href="#O" x="1051"/><use href="#O" x="1065"/><use href="#O" x="1079"/><use href="#O" x="1094"/><use href="#q" x="1108"/><use href="#v" x="1122"/><use href="#b" x="1136"/><use href="#q" x="1150"/><use href="#O" x="1164"/><use href="#r" x="1179"/><use href="#d" x="1193"/><use href="#b" x="1207"/><use href="#q" x="1221"/>
</g>
<g transform="translate(0,882)">
<use href="#v" x="116"/><use href="#O" x="130"/><use href="#O" x="144"/><use href="#O" x="159"/><use href="#O" x="173"/><use href="#O" x="187"/><use href="#O" x="201"/><use href="#O" x="215"/><use href="#O" x="229"/><use href="#O" x="244"/><use href="#O" x="258"/><use href="#O" x="272"/><use href="#O" x="286"/><use href="#O" x="300"/><use href="#v" x="314"/><use href="#O" x="329"/><use href="#O" x="343"/><use href="#O" x="357"/><use href="#b" x="371"/><use href="#O" x="385"/><use href="#O" x="399"/><use href="#O" x="414"/><use href="#O" x="428"/><use href="#v" x="442"/><use href="#O" x="456"/><use href="#O" x="470"/><use href="#O" x="484"/><use href="#O" x="499"/><use href="#v" x="513"/><use href="#q" x="527"/><use href="#r" x="541"/><use href="#h" x="555"/><use href="#b" x="569"/><use href="#b" x="584"/><use href="#b" x="598"/><use href="#b" x="612"/><use href="#b" x="626"/><use href="#b" x="640"/><use href="#b" x="654"/><use href="#b" x="669"/><use href="#h" x="683"/><use href="#v" x="697"/><use href="#b" x="711"/><use href="#q" x="725"/><use href="#O" x="739"/><use href="#O" x="754"/><use href="#v" x="768"/><use href="#O" x="782"/><use href="#O" x="796"/><use href="#q" x="810"/><use href="#h" x="824"/><use href="#O" x="839"/><use href="#O" x="853"/><use href="#O" x="867"/><use href="#O" x="881"/><use href="#O" x="895"/><use href="#O" x="909"/><use href="#O" x="924"/><use href="#v" x="938"/><use href="#t" x="952"/><use href="#r" x="966"/><use href="#h" x="980"/><use href="#O" x="994"/><use href="#q" x="1009"/><use href="#O" x="1023"/><use href="#v" x="1037"/><use href="#h" x="1051"/><use href="#h" x="1065"/><use href="#d" x="1079"/><use href="#O" x="1094"/><use href="#O" x="1108"/><use href="#O" x="1122"/><use href="#O" x="1136"/><use href="#O" x="1150"/><use href="#v" x="1164"/><use href="#r" x="1179"/><use href="#q" x="1193"/><use href="#O" x="1207"/><use href="#O" x="1221"/>
</g>

<!-- convective -->
<text class="l" x="13" y="938" textLength="77" lengthAdjust="spacingAndGlyphs">Конвективн.</text>
<text class="l" x="15" y="959" textLength="74" lengthAdjust="spacingAndGlyphs">облачность</text>
<text class="l" x="39" y="979" textLength="25" lengthAdjust="spacingAndGlyphs">(км)</text>
<text class="n e" x="110" y="911">12</text><text class="n e" x="110" y="928">10</text><text class="n e" x="110" y="945">8</text><text class="n e" x="110" y="961">6</text><text class="n e" x="110" y="977">4</text><text class="n e" x="110" y="994">2</text><text class="n e" x="110" y="1010">0</text>
<text class="n" x="1228" y="911">12</text><text class="n" x="1228" y="928">10</text><text class="n" x="1228" y="945">8</text><text class="n" x="1228" y="961">6</text><text class="n" x="1228" y="977">4</text><text class="n" x="1228" y="994">2</text><text class="n" x="1228" y="1010">0</text>
<g fill="#f08428">
<rect x="237" y="991" width="14" height="6"/><rect x="251" y="988" width="14" height="8"/><rect x="265" y="988" width="14.5" height="4"/><rect x="280" y="988" width="13" height="4"/>
<rect x="322" y="986" width="42" height="3"/><rect x="365" y="969" width="13" height="6"/><rect x="379" y="986" width="14" height="3"/><rect x="393" y="973" width="14" height="5"/>
<rect x="506" y="947" width="14" height="24"/><rect x="520" y="947" width="14" height="31"/><rect x="535" y="952" width="13" height="29"/><rect x="549" y="952" width="14" height="29"/><rect x="563" y="965" width="14" height="27"/><rect x="577" y="969" width="14" height="27"/>
<rect x="606" y="983" width="13" height="17"/><rect x="620" y="983" width="13" height="17"/><rect x="634" y="980" width="14" height="20"/><rect x="648" y="986" width="14" height="13"/><rect x="662" y="986" width="28" height="11"/>
<rect x="705" y="991" width="13" height="5"/><rect x="719" y="991" width="14" height="5"/>
<rect x="931" y="976" width="14" height="8"/><rect x="946" y="976" width="13" height="5"/><rect x="960" y="980" width="14" height="9"/><rect x="974" y="976" width="14" height="18"/><rect x="988" y="980" width="28" height="14"/><rect x="1017" y="988" width="13" height="6"/><rect x="1031" y="988" width="13" height="6"/><rect x="1045" y="988" width="14" height="8"/><rect x="1073" y="988" width="27.5" height="4"/>
</g>
<path d="M116 1006.5H1222" stroke="#000" stroke-dasharray="3 2" shape-rendering="crispEdges"/>

<!-- hours 2 -->
<text class="h" x="116" y="1021">18</text><text class="h" x="158" y="1021">21</text><text class="h" x="201" y="1021">0</text><text class="h" x="244" y="1021">3</text><text class="h" x="286" y="1021">6</text><text class="h" x="329" y="1021">9</text><text class="h" x="371" y="1021">12</text><text class="h" x="414" y="1021">15</text><text class="h" x="456" y="1021">18</text><text class="h" x="499" y="1021">21</text><text class="h" x="541" y="1021">0</text><text class="h" x="584" y="1021">3</text><text class="h" x="626" y="1021">6</text><text class="h" x="669" y="1021">9</text><text class="h" x="711" y="1021">12</text><text class="h" x="754" y="1021">15</text><text class="h" x="796" y="1021">18</text><text class="h" x="839" y="1021">21</text><text class="h" x="881" y="1021">0</text><text class="h" x="924" y="1021">3</text><text class="h" x="966" y="1021">6</text><text class="h" x="1009" y="1021">9</text><text class="h" x="1051" y="1021">12</text><text class="h" x="1094" y="1021">15</text><text class="h" x="1136" y="1021">18</text><text class="h" x="1179" y="1021">21</text><text class="h" x="1221" y="1021">0</text>
</svg>
</body></html>
